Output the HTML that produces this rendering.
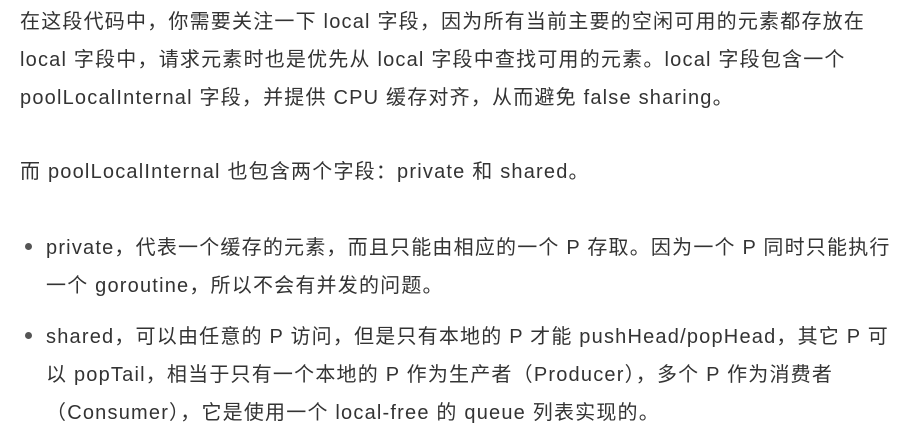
<!DOCTYPE html>
<html><head><meta charset="utf-8"><style>
body{margin:0;background:#fff;width:916px;height:442px;overflow:hidden;font-family:"Liberation Sans","Noto Sans CJK SC",sans-serif;font-size:20px;letter-spacing:1.2px;color:#333;}
.w{position:absolute;left:20px;top:3px;white-space:nowrap;}
p{margin:0;line-height:38px;}
.p2{margin-top:36px;}
ul{margin:37px 0 0 0;padding:0 0 0 26px;}
li{line-height:38px;margin-bottom:12px;}
li::marker{color:#555;font-size:24px;}
</style></head><body><div class="w">
<p>在这段代码中，你需要关注一下 local 字段，因为所有当前主要的空闲可用的元素都存放在<br>local 字段中，请求元素时也是优先从 local 字段中查找可用的元素。local 字段包含一个<br>poolLocalInternal 字段，并提供 CPU 缓存对齐，从而避免 false sharing。</p>
<p class="p2">而 poolLocalInternal 也包含两个字段：private 和 shared。</p>
<ul>
<li>private，代表一个缓存的元素，而且只能由相应的一个 P 存取。因为一个 P 同时只能执行<br>一个 goroutine，所以不会有并发的问题。</li>
<li>shared，可以由任意的 P 访问，但是只有本地的 P 才能 pushHead/popHead，其它 P 可<br>以 popTail，相当于只有一个本地的 P 作为生产者（Producer），多个 P 作为消费者<br>（Consumer），它是使用一个 local-free 的 queue 列表实现的。</li>
</ul>
</div></body></html>
